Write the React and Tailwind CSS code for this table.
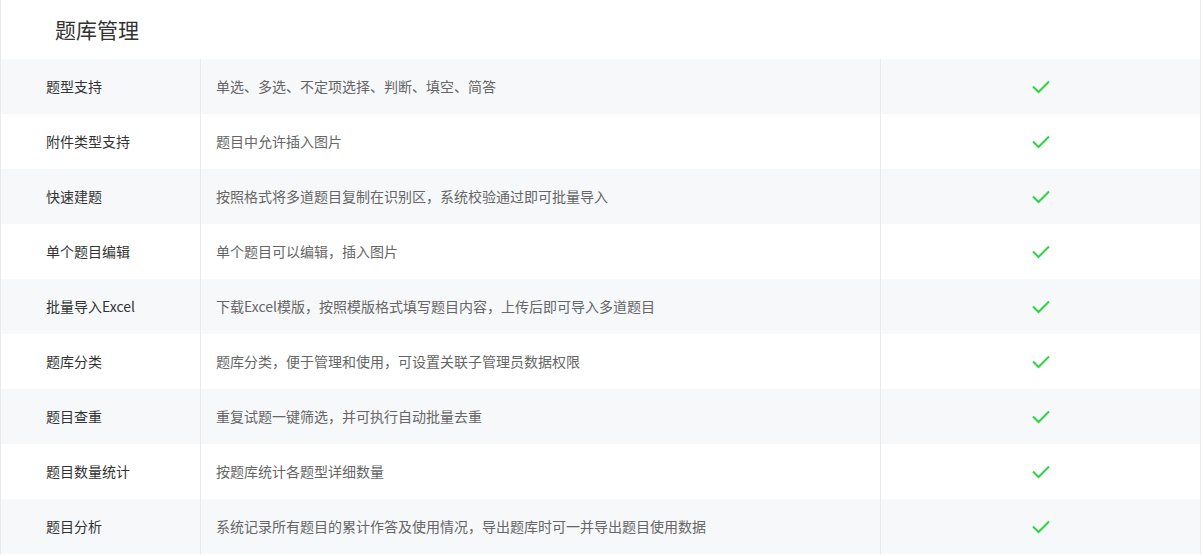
import React from "react";

const rows = [
  ["题型支持", "单选、多选、不定项选择、判断、填空、简答"],
  ["附件类型支持", "题目中允许插入图片"],
  ["快速建题", "按照格式将多道题目复制在识别区，系统校验通过即可批量导入"],
  ["单个题目编辑", "单个题目可以编辑，插入图片"],
  ["批量导入Excel", "下载Excel模版，按照模版格式填写题目内容，上传后即可导入多道题目"],
  ["题库分类", "题库分类，便于管理和使用，可设置关联子管理员数据权限"],
  ["题目查重", "重复试题一键筛选，并可执行自动批量去重"],
  ["题目数量统计", "按题库统计各题型详细数量"],
  ["题目分析", "系统记录所有题目的累计作答及使用情况，导出题库时可一并导出题目使用数据"],
];

function Check() {
  return (
    <svg width="18" height="14" viewBox="0 0 18 14" fill="none">
      <path d="M1 6.5 L6.5 12 L17 1.5" stroke="#2ed445" strokeWidth="2" fill="none" />
    </svg>
  );
}

export default function App() {
  return (
    <div
      className="w-[1201px] h-[554px] border-l border-r border-b border-[#e8eaee] bg-white"
      style={{ fontFamily: '"Microsoft YaHei", "Noto Sans CJK SC", sans-serif' }}
    >
      <div className="h-[59px] flex items-center pl-[54px] text-[21px] text-[#333]">
        题库管理
      </div>
      {rows.map(([a, b], i) => (
        <div
          key={i}
          className={`flex h-[55px] ${i % 2 === 0 ? "bg-[#f7f8fa]" : "bg-white"}`}
        >
          <div className="w-[200px] flex items-center pl-[45px] pb-[1px] text-[14px] text-[#333] border-r border-[#e8eaee]">
            {a}
          </div>
          <div className="w-[680px] flex items-center pl-[15px] pb-[1px] text-[14px] text-[#666] border-r border-[#e8eaee]">
            {b}
          </div>
          <div className="flex-1 flex items-center justify-center">
            <Check />
          </div>
        </div>
      ))}
    </div>
  );
}
